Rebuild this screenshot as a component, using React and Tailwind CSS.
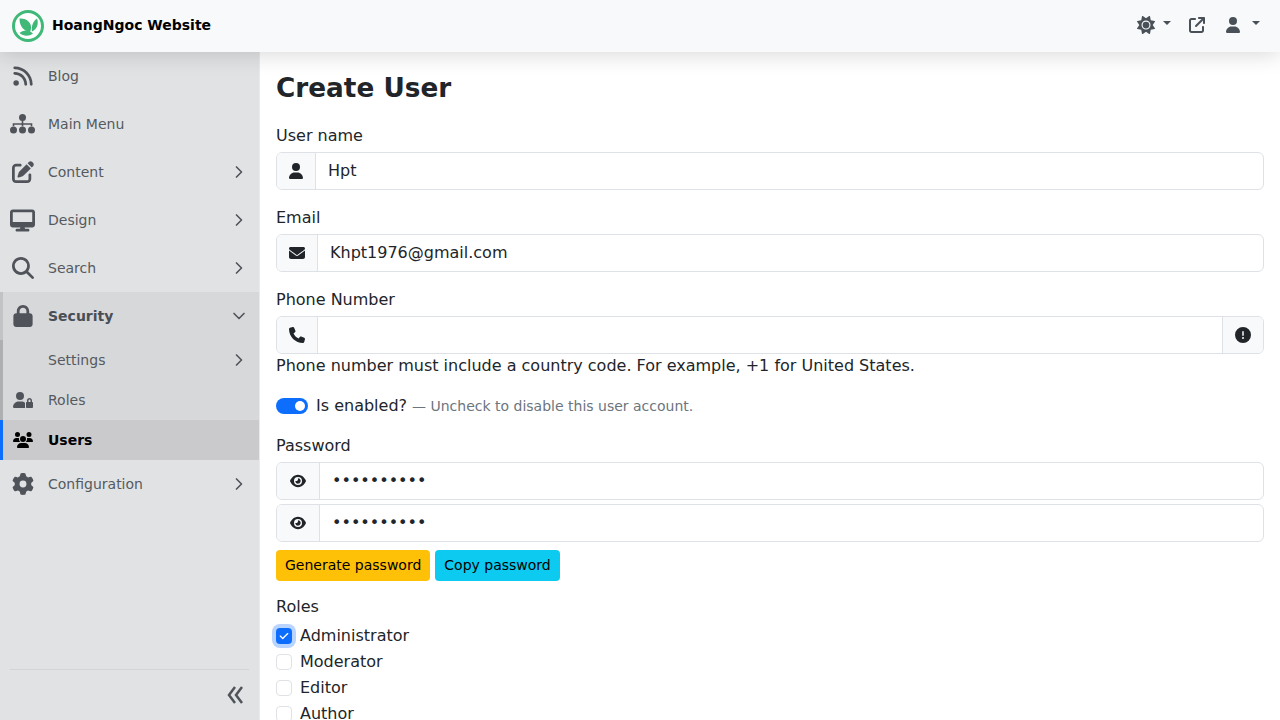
import React from "react";
import {
  FaRss,
  FaPenToSquare,
  FaDesktop,
  FaMagnifyingGlass,
  FaLock,
  FaUserLock,
  FaUsers,
  FaGear,
  FaSun,
  FaArrowUpRightFromSquare,
  FaUser,
  FaEnvelope,
  FaPhone,
  FaCircleExclamation,
  FaEye,
  FaCheck,
} from "react-icons/fa6";
import { ChevronRight, ChevronDown } from "lucide-react";

const Logo = () => (
  <svg width="32" height="32" viewBox="0 0 32 32">
    <circle cx="16" cy="16" r="14.500" fill="#fff" stroke="#3fb878" strokeWidth="3" />
    <path d="M7.500 8.500c6-.5 11 3 11.500 8 .2 2-.2 3.800-1 5.500-6.500-1-10.500-6-10.500-13.500z" fill="#3fb878" />
    <path d="M20 21.500c-.8-5 .5-9.500 5-13 2 5 0 11-5 13z" fill="#3fb878" />
    <path d="M7.500 23c3.500-3.500 9.500-3.500 13.500.5-4 3-9.500 3-13.500-.5z" fill="#3fb878" />
  </svg>
);

const Sitemap = () => (
  <svg width="25" height="20" viewBox="0 0 25 20" fill="#50545a">
    <circle cx="12.500" cy="3.500" r="3.500" />
    <circle cx="3.500" cy="16" r="3.500" />
    <circle cx="12.500" cy="16" r="3.500" />
    <circle cx="21.500" cy="16" r="3.500" />
    <path d="M11.700 6h1.600v3.200h9v3h-1.600v-1.400h-7.400v1.400h-1.600v-1.400H4.300v1.400H2.700v-3h9z" />
  </svg>
);

const Caret = ({ className = "" }) => (
  <span
    className={`mb-[4px] w-0 h-0 border-x-[4px] border-x-transparent border-t-[4px] border-t-[#495057] ${className}`}
  />
);

// icon column is centred on x=22
const IconBox = ({ children }) => (
  <div className="w-[25px] ml-[10px] mr-[13px] shrink-0 flex justify-center">{children}</div>
);

const SideItem = ({ icon: Icon, label, arrow, size = 22 }) => (
  <div className="h-12 flex items-center text-[#555a60]">
    <IconBox>
      <Icon size={size} color="#50545a" />
    </IconBox>
    <span className="text-sm flex-1">{label}</span>
    {arrow && <ChevronRight size={20} strokeWidth={2} className="mr-[10px]" color="#50545a" />}
  </div>
);

const InputRow = ({ icon: Icon, iconWidth, value, right, className = "" }) => (
  <div className={`flex h-[38px] border border-[#dee2e6] rounded-md overflow-hidden ${className}`}>
    <div
      className={`${iconWidth} shrink-0 flex items-center justify-center bg-[#f8f9fa] border-r border-[#dee2e6]`}
    >
      <Icon size={16} color="#212529" />
    </div>
    <div className="flex-1 px-3 flex items-center text-[#212529]">{value}</div>
    {right}
  </div>
);

const RoleCheck = ({ label, checked }) => (
  <div className="h-[26px] flex items-center">
    {checked ? (
      <span className="w-4 h-4 rounded bg-[#0d6efd] flex items-center justify-center shadow-[0_0_0_4px_#b9d4fe]">
        <FaCheck size={10} color="#fff" />
      </span>
    ) : (
      <span className="w-4 h-4 rounded border border-[#dee2e6] bg-white" />
    )}
    <span className="ml-2 text-[#212529]">{label}</span>
  </div>
);

export default function App() {
  return (
    <div className="h-screen overflow-hidden flex flex-col bg-white font-['DejaVu_Sans',sans-serif] text-base text-[#212529]">
      <header className="relative z-10 h-[52px] shrink-0 bg-[#f8f9fa] shadow-[0_2px_22px_rgba(0,0,0,0.16)] flex items-center pl-3 pr-5">
        <Logo />
        <span className="ml-2 pb-[2px] text-sm font-bold text-black">HoangNgoc Website</span>
        <div className="ml-auto pb-[2px] flex items-center">
          <FaSun size={18} color="#495057" />
          <Caret className="ml-[8px]" />
          <FaArrowUpRightFromSquare size={16} color="#495057" className="ml-[18px]" />
          <FaUser size={16} color="#495057" className="ml-[20px]" />
          <Caret className="ml-[11px]" />
        </div>
      </header>

      <div className="flex flex-1 min-h-0">
        <aside className="w-[260px] shrink-0 bg-[#e1e2e4] border-r border-[#e9eaeb] flex flex-col">
          <SideItem icon={FaRss} label="Blog" />
          <SideItem icon={Sitemap} label="Main Menu" />
          <SideItem icon={FaPenToSquare} label="Content" arrow />
          <SideItem icon={FaDesktop} label="Design" arrow size={25} />
          <SideItem icon={FaMagnifyingGlass} label="Search" arrow />

          <div className="bg-[#d7d8da]">
            <div className="h-12 flex items-center border-l-[3px] border-[#c2c3c5] text-[#4a4e54]">
              <div className="w-[25px] ml-[7px] mr-[13px] shrink-0 flex justify-center">
                <FaLock size={22} color="#50545a" />
              </div>
              <span className="text-sm font-bold flex-1">Security</span>
              <ChevronDown size={20} strokeWidth={2} className="mr-[10px]" color="#50545a" />
            </div>
            <div className="border-l-[3px] border-[#aeafb1] text-[#555a60]">
              <div className="h-10 flex items-center pl-[45px]">
                <span className="text-sm flex-1">Settings</span>
                <ChevronRight size={20} strokeWidth={2} className="mr-[10px]" color="#50545a" />
              </div>
              <div className="h-10 flex items-center">
                <div className="w-[25px] ml-[7px] mr-[13px] shrink-0 flex justify-center">
                  <FaUserLock size={20} color="#50545a" />
                </div>
                <span className="text-sm">Roles</span>
              </div>
            </div>
            <div className="h-10 flex items-center border-l-[3px] border-[#0d6efd] bg-[#cacacc] text-black">
              <div className="w-[25px] ml-[7px] mr-[13px] shrink-0 flex justify-center">
                <FaUsers size={20} color="#000" />
              </div>
              <span className="text-sm font-bold">Users</span>
            </div>
          </div>

          <SideItem icon={FaGear} label="Configuration" arrow />

          <div className="mt-auto mx-[10px] border-t border-[#d3d4d6] h-[51px] flex items-center justify-end pr-[5px]">
            <svg width="17" height="18" viewBox="0 0 17 18" fill="none" stroke="#50545a" strokeWidth="2.500">
              <path d="M8 1 2 9l6 8" />
              <path d="M15 1 9 9l6 8" />
            </svg>
          </div>
        </aside>

        <main className="flex-1 min-w-0 px-4 pt-[17px]">
          <h1 className="text-[26.3px] leading-[38px] font-bold mb-[17px]">Create User</h1>

          <label className="block leading-6 mb-[4px]">User name</label>
          <InputRow icon={FaUser} iconWidth="w-[39px]" value="Hpt" />

          <label className="block leading-6 mt-[16px] mb-[4px]">Email</label>
          <InputRow icon={FaEnvelope} iconWidth="w-[41px]" value="Khpt1976@gmail.com" />

          <label className="block leading-6 mt-[16px] mb-[4px]">Phone Number</label>
          <InputRow
            icon={FaPhone}
            iconWidth="w-[41px]"
            value=""
            right={
              <div className="w-[41px] shrink-0 flex items-center justify-center bg-[#f8f9fa] border-l border-[#dee2e6]">
                <FaCircleExclamation size={16} color="#212529" />
              </div>
            }
          />
          <p className="leading-6">
            Phone number must include a country code. For example, +1 for United States.
          </p>

          <div className="flex items-center mt-[16px] h-6">
            <span className="relative w-8 h-4 rounded-full bg-[#0d6efd]">
              <span className="absolute right-[3px] top-[3px] w-[10px] h-[10px] rounded-full bg-white" />
            </span>
            <span className="ml-2">Is enabled?</span>
            <span className="ml-[5px] text-sm text-[#6c757d]">— Uncheck to disable this user account.</span>
          </div>

          <label className="block leading-6 mt-[16px] mb-[4px]">Password</label>
          <InputRow icon={FaEye} iconWidth="w-[43px]" value="••••••••••" />
          <InputRow icon={FaEye} iconWidth="w-[43px]" value="••••••••••" className="mt-1" />

          <div className="flex gap-[5px] mt-2">
            <button className="h-[31px] px-[9px] pb-[1px] rounded bg-[#ffc107] text-sm text-black">
              Generate password
            </button>
            <button className="h-[31px] px-[9px] pb-[1px] rounded bg-[#0dcaf0] text-sm text-black">
              Copy password
            </button>
          </div>

          <label className="block leading-6 mt-[14px] mb-[4px]">Roles</label>
          <RoleCheck label="Administrator" checked />
          <RoleCheck label="Moderator" />
          <RoleCheck label="Editor" />
          <RoleCheck label="Author" />
        </main>
      </div>
    </div>
  );
}
